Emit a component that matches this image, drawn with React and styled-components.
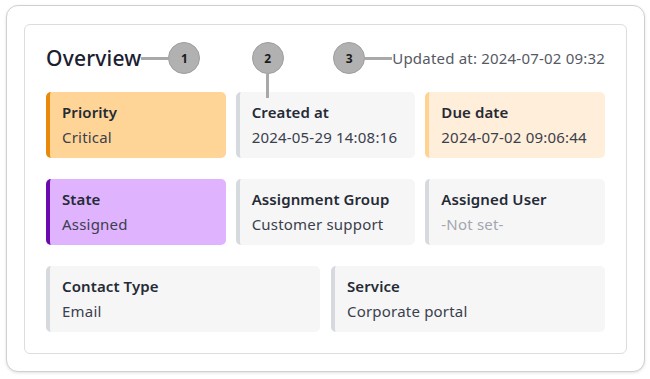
import React from "react";
import styled, { createGlobalStyle } from "styled-components";

const TONES = {
  critical: { bg: "#ffd597", bar: "#e8890c" },
  warn: { bg: "#ffeed9", bar: "#ffd38f" },
  state: { bg: "#e0b3ff", bar: "#6a0aae" },
  plain: { bg: "#f6f6f7", bar: "#d6d9de" },
};

const ROWS = [
  [
    { label: "Priority", value: "Critical", tone: "critical" },
    { label: "Created at", value: "2024-05-29 14:08:16", tone: "plain", pin: "2" },
    { label: "Due date", value: "2024-07-02 09:06:44", tone: "warn" },
  ],
  [
    { label: "State", value: "Assigned", tone: "state" },
    { label: "Assignment Group", value: "Customer support", tone: "plain" },
    { label: "Assigned User", value: "-Not set-", tone: "plain", empty: true },
  ],
  [
    { label: "Contact Type", value: "Email", tone: "plain" },
    { label: "Service", value: "Corporate portal", tone: "plain" },
  ],
];

export default function App() {
  return (
    <>
      <GlobalStyle />
      <Page>
        <Outer>
          <Inner>
            <Header>
              <TitleGroup>
                <Title>Overview</Title>
                <HLine $w={27} />
                <Badge>1</Badge>
              </TitleGroup>
              <UpdatedGroup>
                <Badge>3</Badge>
                <HLine $w={27} />
                <Updated>Updated at: 2024-07-02 09:32</Updated>
              </UpdatedGroup>
            </Header>

            <Rows>
              {ROWS.map((row, i) => (
                <Row key={i} $cols={row.length}>
                  {row.map((f) => (
                    <Field key={f.label} $tone={f.tone}>
                      {f.pin && (
                        <Pin>
                          <Badge>{f.pin}</Badge>
                          <VLine />
                        </Pin>
                      )}
                      <Label>{f.label}</Label>
                      <Value $empty={f.empty}>{f.value}</Value>
                    </Field>
                  ))}
                </Row>
              ))}
            </Rows>
          </Inner>
        </Outer>
      </Page>
    </>
  );
}

const GlobalStyle = createGlobalStyle`
  html, body {
    margin: 0;
    padding: 0;
    background: #ffffff;
    font-family: "Noto Sans", "Open Sans", "Liberation Sans", sans-serif;
  }
  * { box-sizing: border-box; }
`;

const Page = styled.div`
  width: 650px;
  height: 379px;
  padding: 5px 5px 7px 6px;
`;

const Outer = styled.div`
  height: 100%;
  padding: 18px 17px 17px;
  border: 1px solid #cfd0d3;
  border-radius: 12px;
  background: #fff;
  box-shadow: 0 1px 3px rgba(0, 0, 0, 0.12);
`;

const Inner = styled.div`
  height: 100%;
  padding: 17px 21px 21px;
  border: 1px solid #dcdde1;
  border-radius: 6px;
`;

const Header = styled.div`
  display: flex;
  align-items: center;
  justify-content: space-between;
  height: 32px;
  margin-bottom: 18px;
`;

const TitleGroup = styled.div`
  display: flex;
  align-items: center;
`;

const Title = styled.h2`
  margin: 0;
  font-size: 21px;
  font-weight: 500;
  letter-spacing: 0.2px;
  color: #1a2030;
`;

const UpdatedGroup = styled.div`
  display: flex;
  align-items: center;
`;

const Updated = styled.span`
  font-size: 15px;
  letter-spacing: 0.2px;
  color: #555a63;
`;

const Badge = styled.span`
  display: inline-flex;
  align-items: center;
  justify-content: center;
  width: 32px;
  height: 32px;
  flex: none;
  border-radius: 50%;
  background: #b1b1b1;
  border: 1px solid #9e9e9e;
  color: #1a1a1a;
  font-size: 12px;
  font-weight: 700;
`;

const HLine = styled.span`
  width: ${(p) => p.$w}px;
  height: 3px;
  flex: none;
  background: #a9a9a9;
`;

const VLine = styled.span`
  width: 3px;
  height: 24px;
  background: #a9a9a9;
`;

const Pin = styled.div`
  position: absolute;
  left: 12px;
  top: -50px;
  display: flex;
  flex-direction: column;
  align-items: center;
`;

const Rows = styled.div`
  display: flex;
  flex-direction: column;
  gap: 21px;
`;

const Row = styled.div`
  display: grid;
  grid-template-columns: repeat(${(p) => p.$cols}, 1fr);
  gap: ${(p) => (p.$cols === 2 ? 11 : 10)}px;
`;

const Field = styled.div`
  position: relative;
  height: 66px;
  padding: 8px 12px 0;
  border-left: 4px solid ${(p) => TONES[p.$tone].bar};
  border-radius: 5px;
  background: ${(p) => TONES[p.$tone].bg};
`;

const Label = styled.div`
  font-size: 15px;
  font-weight: 600;
  line-height: 25px;
  letter-spacing: 0.1px;
  color: #252a35;
`;

const Value = styled.div`
  font-size: 15px;
  line-height: 25px;
  letter-spacing: 0.2px;
  color: ${(p) => (p.$empty ? "#a3a6ad" : "#3a404c")};
`;
